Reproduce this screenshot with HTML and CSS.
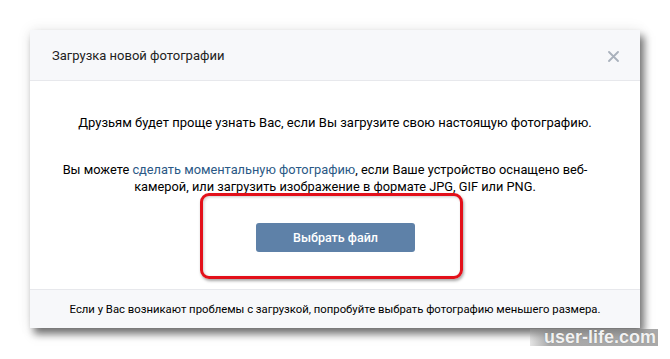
FILE: index.html
```html
<!DOCTYPE html>
<html lang="ru">

<head>
    <meta charset="UTF-8">
    <meta name="viewport" content="width=device-width, initial-scale=1.0">
    <title>Загрузка новой фотографии</title>
    <link rel="stylesheet" href="styles.css">
</head>

<body>

    <div class="page">
        <div class="dialog">
            <div class="dialog-header">
                <span class="dialog-title">Загрузка новой фотографии</span>
                <button class="close-btn" aria-label="Закрыть">
                    <svg width="11" height="11" viewBox="0 0 11 11">
                        <path d="M1 1 L10 10 M10 1 L1 10" stroke="#a9b1bc" stroke-width="1.8" stroke-linecap="round" />
                    </svg>
                </button>
            </div>
            <div class="dialog-body">
                <p class="intro">Друзьям будет проще узнать Вас, если Вы загрузите свою настоящую фотографию.</p>
                <p class="hint"><span class="hint-first">Вы можете <a href="#">сделать моментальную фотографию</a>, если Ваше устройство оснащено веб-</span><br>камерой, или загрузить изображение в формате JPG, GIF или PNG.</p>
                <div class="highlight">
                    <button class="choose-btn">Выбрать файл</button>
                </div>
            </div>
            <div class="dialog-footer">
                Если у Вас возникают проблемы с загрузкой, попробуйте выбрать фотографию меньшего размера.
            </div>
        </div>
        <div class="watermark">user-life.com</div>
    </div>

</body>

</html>
```

FILE: styles.css
```css
body {
    font-family: Roboto, 'Open Sans', sans-serif;
    margin: 0;
    padding: 0;
    background-color: #ffffff;
    overflow: hidden;
}

.page {
    position: relative;
    width: 670px;
    height: 359px;
    padding: 30px;
    box-sizing: border-box;
}

.dialog {
    width: 610px;
    height: 298px;
    display: flex;
    flex-direction: column;
    background-color: #ffffff;
    box-shadow: 4px 6px 8px rgba(0, 0, 0, 0.55), 0 0 14px rgba(0, 0, 0, 0.08);
}

.dialog-header {
    height: 50px;
    display: flex;
    align-items: center;
    justify-content: space-between;
    padding: 0 21px 0 22px;
    background-color: #f7f8fa;
    border-bottom: 1px solid #e7e8ec;
}

.dialog-title {
    font-size: 13px;
    color: #222;
}

.close-btn {
    background: none;
    border: none;
    padding: 0;
    width: 11px;
    height: 11px;
    cursor: pointer;
}

.dialog-body {
    flex: 1;
    display: flex;
    flex-direction: column;
    align-items: center;
    padding-top: 33px;
    text-align: center;
    font-size: 13px;
    line-height: 17px;
    color: #000;
}

.dialog-body p {
    margin: 0;
}

.intro {
    margin-bottom: 30px !important;
}

.hint {
    font-size: 12.8px;
}

.hint-first {
    padding-right: 20px;
}

.hint a {
    color: #2a5885;
    text-decoration: none;
}

.highlight {
    margin-top: -2px;
    margin-left: -7px;
    padding: 27px 45px 24px 53px;
    border: 3px solid #e3101a;
    border-radius: 9px;
    box-shadow: 1px 2px 3px rgba(0, 0, 0, 0.35), inset 1px 1px 3px rgba(0, 0, 0, 0.2);
}

.choose-btn {
    width: 159px;
    height: 29px;
    border: none;
    border-radius: 3px;
    background-color: #5e81a8;
    color: #ffffff;
    font-family: Roboto, 'Open Sans', sans-serif;
    font-size: 12.5px;
    font-weight: 500;
    cursor: pointer;
}

.dialog-footer {
    height: 38px;
    display: flex;
    align-items: center;
    justify-content: center;
    background-color: #f7f8fa;
    border-top: 1px solid #e7e8ec;
    font-size: 11.3px;
    color: #000;
}

.watermark {
    position: absolute;
    left: 530px;
    top: 329px;
    width: 128px;
    height: 17px;
    padding-left: 14px;
    box-sizing: border-box;
    background: linear-gradient(to right, rgba(170, 170, 170, 0.3), rgba(140, 140, 140, 0.75) 15%, rgba(140, 140, 140, 0.75));
    color: #f2f2f2;
    font-family: 'Liberation Sans', Arial, sans-serif;
    font-size: 18px;
    font-weight: bold;
    line-height: 17px;
    white-space: nowrap;
    text-shadow: 0 0 1px rgba(0, 0, 0, 0.3);
}
```
